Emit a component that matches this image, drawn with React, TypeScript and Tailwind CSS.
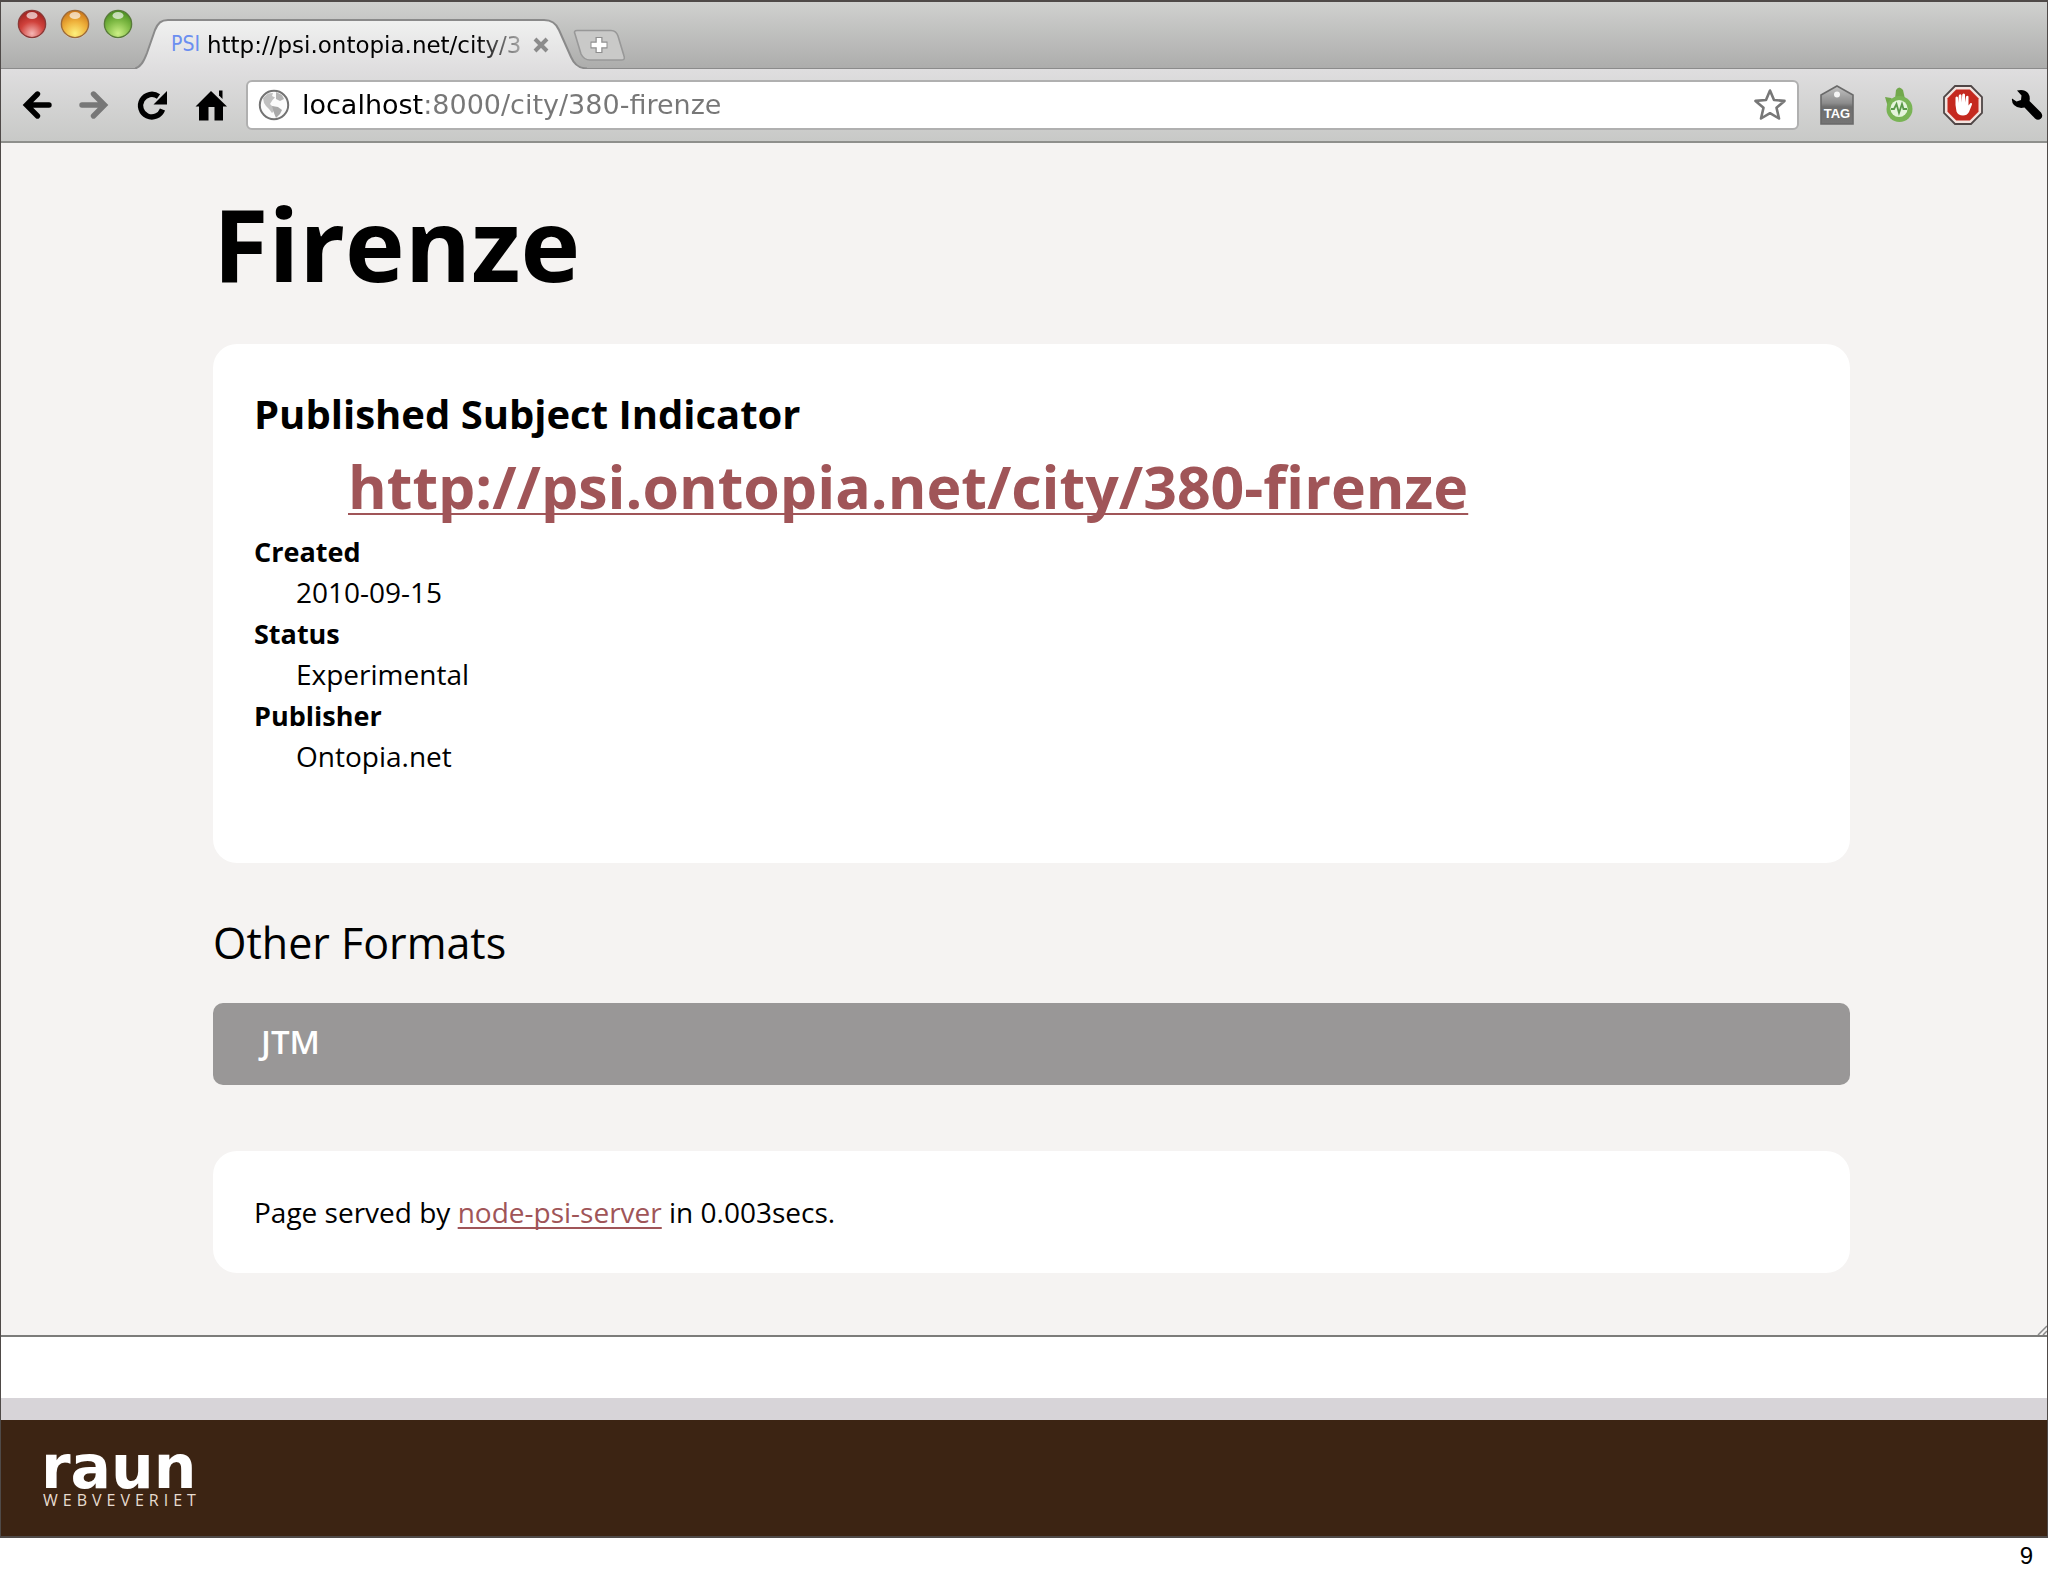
import React from 'react';

interface DetailProps {
  label: string;
  value: string;
}

const details: DetailProps[] = [
  { label: 'Created', value: '2010-09-15' },
  { label: 'Status', value: 'Experimental' },
  { label: 'Publisher', value: 'Ontopia.net' },
];

const WindowLight: React.FC<{ id: string; label: string; top: string; mid: string; glow: string; ring: string }> = ({
  id,
  label,
  top,
  mid,
  glow,
  ring,
}) => (
  <button type="button" aria-label={label} className="h-[30px] w-[30px]">
    <svg viewBox="0 0 30 30" className="block h-full w-full">
      <defs>
        <radialGradient id={id} cx="0.5" cy="0.85" r="0.8">
          <stop offset="0" stopColor={glow} />
          <stop offset="0.55" stopColor={mid} />
          <stop offset="1" stopColor={top} />
        </radialGradient>
      </defs>
      <ellipse cx="15" cy="15.6" rx="14" ry="14" fill="#e6e6e6" />
      <circle cx="15" cy="15" r="13.6" fill={`url(#${id})`} stroke={ring} strokeWidth="1.4" />
      <ellipse cx="15" cy="6.5" rx="5.5" ry="3.6" fill="#fff" opacity="0.65" />
    </svg>
  </button>
);

const TabStrip: React.FC = () => (
  <div className="flex h-[67px] items-end border-b border-[#8b8b8b] bg-linear-to-b from-[#d0d1cf] to-[#adadac]">
    <div className="flex h-full w-[134px] shrink-0 items-start gap-[13px] pt-[7px] pl-4">
      <WindowLight id="light-close" label="Close window" top="#a3231f" mid="#d0423c" glow="#f5b6b4" ring="#8a3a38" />
      <WindowLight id="light-minimize" label="Minimize window" top="#cf7a1b" mid="#efb23c" glow="#fdf07c" ring="#9b6a3a" />
      <WindowLight id="light-zoom" label="Zoom window" top="#4d9222" mid="#83bd48" glow="#ccf086" ring="#587a3a" />
    </div>

    <div className="relative -mb-px h-[50px] w-[452px] shrink-0">
      <svg viewBox="0 0 452 50" preserveAspectRatio="none" className="absolute inset-0 h-full w-full">
        <defs>
          <linearGradient id="tab-fill" x1="0" y1="0" x2="0" y2="1">
            <stop offset="0" stopColor="#f0f1f0" />
            <stop offset="1" stopColor="#dfdedf" />
          </linearGradient>
        </defs>
        <path
          d="M0 50 C6 48 9 42 12 34 L20 11 C23 4 26 1 33 1 H409 C416 1 421 4 424 11 L436 38 C439 45 443 49 452 50 Z"
          fill="url(#tab-fill)"
        />
        <path
          d="M0 49.5 C6 48 9 42 12 34 L20 11 C23 4 26 1 33 1 H409 C416 1 421 4 424 11 L436 38 C439 45 443 49 452 49.5"
          fill="none"
          stroke="#8a8a8a"
          strokeWidth="2"
        />
      </svg>
      <div className="relative flex h-full items-center pt-0.5 pl-9">
        <span className="w-9 font-['DejaVu_Sans_Condensed','DejaVu_Sans',sans-serif] text-[21px] text-[#6b8ff0]">PSI</span>
        <span className="w-[318px] font-['DejaVu_Sans',sans-serif] text-[23px] whitespace-nowrap text-black [mask-image:linear-gradient(90deg,#000_85%,#0003)]">
          http://psi.ontopia.net/city/3
        </span>
        <button type="button" aria-label="Close tab" className="ml-2 h-4 w-4">
          <svg viewBox="0 0 16 16" className="block h-full w-full">
            <path d="M2 2 L14 14 M14 2 L2 14" stroke="#8b8b8b" strokeWidth="4" />
          </svg>
        </button>
      </div>
    </div>

    <button type="button" aria-label="New tab" className="mb-[7px] -ml-3.5 h-8 w-[52px] shrink-0">
      <svg viewBox="0 0 52 32" className="block h-full w-full">
        <path
          d="M4 1.5 H38 C42 1.5 44 4 45 7 L51 27 C52 30 51 31 48 31 H17 C12 31 10 29 8 25 L2 5 C1 3 1.500 1.500 4 1.500 Z"
          fill="#c9c9c8"
          stroke="#989898"
          strokeWidth="1.6"
        />
        <path d="M26 8 V24 M17.500 16 H34.500" stroke="#8e8e8e" strokeWidth="7" />
        <path d="M26 9 V23 M18.500 16 H33.500" stroke="#fff" strokeWidth="4.500" />
      </svg>
    </button>
  </div>
);

const BackIcon = () => (
  <svg viewBox="0 0 30 30" className="block h-[30px] w-[30px]">
    <path d="M15.500 4 L4.500 15 L15.500 26 M5 15 H27" fill="none" stroke="currentColor" strokeWidth="5.400" strokeLinecap="round" />
  </svg>
);

const ReloadIcon = () => (
  <svg viewBox="0 0 32 32" className="block h-8 w-8">
    <path d="M26.500 20.500 A11.300 11.300 0 1 1 22.500 7.500" fill="none" stroke="currentColor" strokeWidth="5.400" />
    <path d="M31 2 V15.500 H17.500 Z" fill="currentColor" />
  </svg>
);

const HomeIcon = () => (
  <svg viewBox="0 0 32 32" className="block h-8 w-8">
    <path d="M16 2 L32 17.500 H28 V31.500 H19.500 V18 H13.500 V31.500 H4 V17.500 H0.500 Z" fill="currentColor" />
    <path d="M24 1.500 H27.500 V10 L24 6.500 Z" fill="currentColor" />
  </svg>
);

const GlobeIcon = () => (
  <svg viewBox="0 0 32 32" className="block h-8 w-8 shrink-0">
    <circle cx="16" cy="16" r="14.200" fill="#fbfbfb" stroke="#727272" strokeWidth="2" />
    <path d="M5 9 L10 4.500 L15 4 L14 7 L17 8.500 L14.500 11 L12 15 L14 17 L17 18.500 L16 22 L14 24 L11 20 L8 17 L6 14 Z" fill="#c0c0c0" />
    <path d="M18 3 L24 6 L26 10 L22 12 L18 10 Z" fill="#b4b4b4" />
    <path d="M14 17 L20 18 L24 21 L22 25 L18 29 L16 24 Z" fill="#a8a8a8" />
  </svg>
);

const StarIcon = () => (
  <svg viewBox="0 0 34 34" className="block h-[34px] w-[34px]">
    <path
      d="M17 2.500 L21 12 L31.500 12.900 L23.500 19.700 L26 30.500 L17 25.200 L8 30.500 L10.500 19.700 L2.500 12.900 L13 12 Z"
      fill="#fff"
      stroke="#777"
      strokeWidth="2.600"
      strokeLinejoin="round"
    />
  </svg>
);

const TagIcon = () => (
  <svg viewBox="0 0 36 40" className="block h-10 w-9">
    <defs>
      <linearGradient id="tag-fill" x1="0" y1="0" x2="0" y2="1">
        <stop offset="0" stopColor="#c4c4c4" />
        <stop offset="0.450" stopColor="#8c8c8c" />
        <stop offset="0.550" stopColor="#6e6e6e" />
        <stop offset="1" stopColor="#757575" />
      </linearGradient>
    </defs>
    <path d="M18 1 L34 10 V39 H2 V10 Z" fill="url(#tag-fill)" stroke="#6a6a6a" strokeWidth="1.600" />
    <circle cx="18" cy="9.500" r="3" fill="#f4f4f4" />
    <text x="18" y="33" textAnchor="middle" fontSize="13" fontWeight="700" fontFamily="Liberation Sans, sans-serif" fill="#fff">
      TAG
    </text>
  </svg>
);

const MonitorIcon = () => (
  <svg viewBox="0 0 32 38" className="block h-[38px] w-8">
    <path d="M12 13 L13 4 Q16 -1 20 4 L22 13 Z" fill="#72a84c" />
    <path d="M2 11 L8 12 L12 16 L5 21 Z" fill="#72a84c" />
    <circle cx="16.500" cy="23" r="13" fill="#79b455" />
    <circle cx="16" cy="22.500" r="8.600" fill="#e5f4dc" />
    <path d="M8 23 H11 L13.500 18 L16 27 L19 18 L20.500 23 H24" fill="none" stroke="#5b9a4a" strokeWidth="1.800" />
  </svg>
);

const BlockIcon = () => (
  <svg viewBox="0 0 40 40" className="block h-10 w-10">
    <path d="M12 1 H28 L39 12 V28 L28 39 H12 L1 28 V12 Z" fill="#f3e3df" stroke="#4f4646" strokeWidth="1.800" />
    <path d="M13.200 4.500 H26.800 L35.500 13.200 V26.800 L26.800 35.500 H13.200 L4.500 26.800 V13.200 Z" fill="#c5291f" />
    <path
      d="M12.500 20 V12.500 Q13.700 10.500 15 12.500 V18 L15.800 10.500 Q17.300 8 18.500 10.500 V17.500 L19.300 9.500 Q20.800 7.500 22 9.500 V17.500 L23 11.500 Q24.500 9.800 25.500 11.500 V20.500 L27.500 18 Q29.500 17.500 29 19.500 L26 27 Q24 30.500 20 30.500 Q15 30.500 13.500 26.500 Z"
      fill="#fff"
    />
  </svg>
);

const WrenchIcon = () => (
  <svg viewBox="0 0 32 32" className="block h-8 w-8">
    <path
      d="M6 1.500 Q13 -0.500 17 4 Q19.500 7.500 18.500 12 L30 23.500 Q32.500 27 30 29.500 Q27 32 24 29.500 L13.500 18.500 Q7 20 3 16 Q0.500 13 1 9.500 L5.500 12.500 L10 11 L10.500 6.500 Z"
      fill="currentColor"
    />
  </svg>
);

const Toolbar: React.FC = () => (
  <div className="flex h-[74px] items-center border-b-2 border-[#8e8f8c] bg-linear-to-b from-[#dfdedf] to-[#c8c9c7] pr-1 pl-[21px] text-black">
    <div className="flex w-[224px] shrink-0 items-center gap-[27px]">
      <button type="button" aria-label="Back">
        <BackIcon />
      </button>
      <button type="button" aria-label="Forward" className="rotate-180 text-[#777]">
        <BackIcon />
      </button>
      <button type="button" aria-label="Reload">
        <ReloadIcon />
      </button>
      <button type="button" aria-label="Home">
        <HomeIcon />
      </button>
    </div>

    <label className="flex h-[50px] min-w-0 flex-1 items-center rounded-md border-2 border-[#b0b0b0] bg-white px-2.5">
      <GlobeIcon />
      <input
        type="text"
        aria-label="Address"
        defaultValue="localhost:8000/city/380-firenze"
        className="ml-3 min-w-0 flex-1 bg-[linear-gradient(90deg,#000_121px,#777_121px)] bg-clip-text font-['DejaVu_Sans',sans-serif] text-[27px] text-transparent outline-none"
      />
      <button type="button" aria-label="Bookmark this page">
        <StarIcon />
      </button>
    </label>

    <div className="ml-5 flex shrink-0 items-center gap-7">
      <button type="button" aria-label="Tag">
        <TagIcon />
      </button>
      <button type="button" aria-label="Monitor">
        <MonitorIcon />
      </button>
      <button type="button" aria-label="Ad blocker">
        <BlockIcon />
      </button>
      <button type="button" aria-label="Settings">
        <WrenchIcon />
      </button>
    </div>
  </div>
);

const PsiPage: React.FC = () => (
  <div className="relative border-b-2 border-[#7c7c7a] bg-[#f5f3f2] pt-10 pb-[62px] font-['Open_Sans',sans-serif] text-black">
    <main className="ml-[212px] w-4/5">
      <h1 className="text-[101px] leading-[120px] font-bold">Firenze</h1>

      <section className="mt-[41px] rounded-3xl bg-white px-[41px] pt-[43px] pb-[86px]">
        <dl className="text-[28px] leading-[41px]">
          <dt className="text-[40px] leading-[54px] font-bold">Published Subject Indicator</dt>
          <dd className="pl-[94px] text-[59px] leading-[90px] font-bold">
            <a
              href="http://psi.ontopia.net/city/380-firenze"
              className="text-[#a05558] underline decoration-2 underline-offset-4 [text-decoration-skip-ink:none]"
            >
              http://psi.ontopia.net/city/380-firenze
            </a>
          </dd>
          {details.map((detail) => (
            <React.Fragment key={detail.label}>
              <dt className="text-[27px] font-bold">{detail.label}</dt>
              <dd className="pl-[42px]">{detail.value}</dd>
            </React.Fragment>
          ))}
        </dl>
      </section>

      <h2 className="mt-[50px] text-[43px] leading-[60px] font-medium">Other Formats</h2>
      <a
        href="#jtm"
        className="mt-[30px] flex h-[82px] items-center rounded-[10px] bg-[#999797] px-12 pb-1 text-[33px] font-semibold text-white"
      >
        JTM
      </a>

      <footer className="mt-[66px] flex h-[122px] items-center rounded-3xl bg-white px-[41px] text-[28px]">
        <p>
          Page served by{' '}
          <a href="#node-psi-server" className="text-[#a05558] underline decoration-2 underline-offset-4 [text-decoration-skip-ink:none]">
            node-psi-server
          </a>{' '}
          in 0.003secs.
        </p>
      </footer>
    </main>

    <svg viewBox="0 0 10 10" className="absolute right-0 bottom-0 h-2.5 w-2.5">
      <path d="M1 10 L10 1 M6 10 L10 6" stroke="#8a8a8a" strokeWidth="1.500" />
    </svg>
  </div>
);

const BrandFooter: React.FC = () => (
  <div className="border-t-[22px] border-[#d7d4d8] bg-[#3c2413]">
    <div className="flex h-[116px] flex-col pt-7 pl-10 text-white">
      <span className="font-['DejaVu_Sans',sans-serif] text-[60px] leading-[38px] font-bold">raun</span>
      <span className="pt-0.5 pl-0.5 font-['Open_Sans',sans-serif] text-[16px] leading-6 tracking-[5px] text-[#e8dcd0]">WEBVEVERIET</span>
    </div>
  </div>
);

const App: React.FC = () => (
  <div className="min-h-screen bg-white">
    <div className="border border-y-2 border-[#4f4a48] bg-white">
      <TabStrip />
      <Toolbar />
      <PsiPage />
      <div className="h-[61px]"></div>
      <BrandFooter />
    </div>
    <p className="pt-1 pr-[15px] text-right font-['Liberation_Sans',sans-serif] text-[24px] leading-7 text-black">9</p>
  </div>
);

export default App;
